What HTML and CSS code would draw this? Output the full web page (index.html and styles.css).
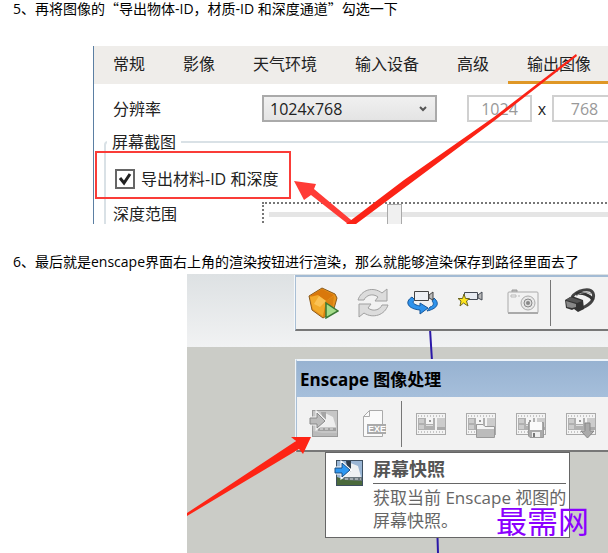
FILE: index.html
```html
<!DOCTYPE html>
<html lang="zh-CN">
<head>
    <meta charset="UTF-8">
    <meta name="viewport" content="width=device-width, initial-scale=1.0">
    <title>Enscape 渲染教程</title>
    <link rel="stylesheet" href="styles.css">
</head>
<body>
    <p class="step">5、再将图像的<span class="quote">“</span>导出物体-ID，材质-ID 和深度通道<span class="quote">”</span>勾选一下</p>

    <div class="settings">
        <div class="tabs">
            <button class="tab">常规</button>
            <button class="tab">影像</button>
            <button class="tab">天气环境</button>
            <button class="tab">输入设备</button>
            <button class="tab">高级</button>
            <button class="tab active">输出图像</button>
        </div>
        <div class="row resolution">
            <label class="row-label" for="resolution">分辨率</label>
            <select id="resolution">
                <option>1024x768</option>
            </select>
            <input class="size" type="text" value="1024" aria-label="宽度" disabled>
            <span class="times">x</span>
            <input class="size" type="text" value="768" aria-label="高度" disabled>
        </div>
        <fieldset>
            <legend>屏幕截图</legend>
            <div class="highlight">
                <input type="checkbox" id="export-depth" checked>
                <label for="export-depth">导出材料-ID 和深度</label>
            </div>
            <div class="row depth">
                <label class="row-label" for="depth-range">深度范围</label>
                <div class="slider">
                    <input type="range" id="depth-range" min="0" max="1000" value="342">
                </div>
            </div>
        </fieldset>
        <svg class="overlay" width="515" height="178">
            <path fill="#ff3b36" d="M200 135L222 138L220 143L262 178H254L217 149L210 154Z"/>
            <path fill="#fb2316" d="M482 8L483 10L400 75L262 178H252L310 134L400 71Z"/>
        </svg>
    </div>

    <p class="step">6、最后就是enscape界面右上角的渲染按钮进行渲染，那么就能够渲染保存到路径里面去了</p>

    <div class="viewport">
        <svg class="overlay" width="421" height="279">
            <path d="M243 55L245 87L251 279" stroke="#2b18a8" stroke-width="2" fill="none"/>
        </svg>

        <div class="toolbar main-bar">
            <button class="tool" aria-label="启动">
                <svg width="32" height="32" viewBox="0 0 32 32">
                    <path d="M15 1L28 7L30 11L26 25L16 31L5 23L2 9Z" fill="#e8941c" stroke="#8a5a1c"/>
                    <path d="M15 2L27 8L19 14L3 9Z" fill="#d9780c"/>
                    <path d="M3 10L11 8L19 14L16 29L6 22Z" fill="#f2aa2b"/>
                    <path d="M12 9L19 14L13 20L7 17Z" fill="#fac255"/>
                    <path d="M19 14L27 9L25 24L16 30Z" fill="#d98212"/>
                    <path d="M19 16L31 24L19 31Z" fill="#a5dc8a" stroke="#3b7a35" stroke-width="1.5"/>
                </svg>
            </button>
            <button class="tool" aria-label="同步">
                <svg width="32" height="32" viewBox="0 0 32 32" fill="#dcdcdc" stroke="#a0a0a0">
                    <path d="M1 13C4 3 16 -1 25 6L30 2V14H18L21 10C16 6 9 8 7 13Z"/>
                    <path d="M31 18C28 28 16 32 7 26L2 30V17H14L11 21C16 25 23 23 25 18Z"/>
                </svg>
            </button>
            <button class="tool" aria-label="同步视图">
                <svg width="32" height="32" viewBox="0 0 32 32">
                    <path d="M5 10C-3 15 1 22 13 23V27L21 21L13 16V19C7 18 4 15 8 13Z" fill="#2f93ec" stroke="#17579b"/>
                    <path d="M27 11C34 17 29 22 20 24L23 20C27 19 27 16 25 14Z" fill="#2f93ec" stroke="#17579b"/>
                    <path d="M7.500 4.500H21.500V13.500H7.500Z" fill="#eef0f4" stroke="#444"/>
                    <path d="M22 8L26 5V13L22 11Z" fill="#bbb" stroke="#444"/>
                </svg>
            </button>
            <button class="tool" aria-label="收藏视图">
                <svg width="32" height="32" viewBox="0 0 32 32">
                    <path d="M7.500 5.500H20.500V12.500H7.500Z" fill="#e7ebf2" stroke="#444a55"/>
                    <path d="M21 8L25 5V13L21 11Z" fill="#bbb" stroke="#444a55"/>
                    <path d="M7 7L8.500 11.500H12.500L9.500 14L11 19L6.500 16L3 19L4 14L1 11.500H5.500Z" fill="#ffe51d" stroke="#6d6720"/>
                </svg>
            </button>
            <button class="tool" aria-label="拍照">
                <svg width="32" height="32" viewBox="0 0 32 32">
                    <path d="M5 5V3H10V5" fill="#bbb" stroke="#999"/>
                    <rect x="1" y="5" width="30" height="21" rx="1" fill="#f2f2f2" stroke="#aaa"/>
                    <path d="M1 26H31" stroke="#aaa" stroke-width="2"/>
                    <path d="M4 8H9V10H4ZM11 9H13" fill="none" stroke="#bbb"/>
                    <circle cx="21" cy="16" r="7" fill="#e8e8e8" stroke="#aaa"/>
                    <circle cx="21" cy="16" r="4" fill="#ddd" stroke="#888"/>
                    <circle cx="21" cy="16" r="2" fill="#888"/>
                </svg>
            </button>
            <span class="divider"></span>
            <button class="tool" aria-label="虚拟现实">
                <svg width="32" height="32" viewBox="0 0 32 32">
                    <path d="M8 10C13 3 26 0 29 6C31 11 28 17 18 21" fill="none" stroke="#444" stroke-width="3"/>
                    <path d="M12 7C18 5 26 8 29 13" fill="none" stroke="#333" stroke-width="3"/>
                    <path d="M12 9C16 6 22 4 27 7" fill="none" stroke="#999"/>
                    <path d="M1 13L8 9L19 13L20 22L14 25L10 22L8 23L2 21Z" fill="#333"/>
                    <path d="M2 14L12 17V20L8 21L3 20Z" fill="#888"/>
                    <path d="M6 10L18 14L13 16L2 13Z" fill="#555"/>
                </svg>
            </button>
        </div>

        <div class="toolbar image-bar">
            <div class="title">Enscape 图像处理</div>
            <div class="tools">
                <button class="tool" aria-label="屏幕快照">
                    <svg width="32" height="32" viewBox="0 0 32 32">
                        <rect x="4.500" y="2.500" width="25" height="26" fill="#c6c6c6" stroke="#999"/>
                        <path d="M8 18L15 4L25 9L28 19H8Z" fill="#eee"/>
                        <path d="M13 4H18V12L14 9Z" fill="#a5a5a5"/>
                        <path d="M10 20H28V23H10Z" fill="#a0a0a0"/>
                        <path d="M12 21H27" stroke="#e5e5e5" stroke-dasharray="3 2"/>
                        <path d="M5 28V23L14 25H29V28Z" fill="#bababa"/>
                        <path d="M2 10H9V5L17 13L9 20V16H2Z" fill="#bbb" stroke="#f2f2f2" stroke-width="3"/>
                        <path d="M2 10H9V5L17 13L9 20V16H2Z" fill="#bbb" stroke="#888"/>
                    </svg>
                </button>
                <button class="tool" aria-label="导出 EXE">
                    <svg width="32" height="32" viewBox="0 0 32 32">
                        <path d="M11.500 2.500H24.500V28.500H5.500V8.500Z" fill="#fafafa" stroke="#aaa"/>
                        <path d="M11.500 2.500V8.500H5.500" fill="none" stroke="#aaa"/>
                        <rect x="9" y="16" width="19" height="10" fill="#aaa"/>
                        <text class="exe" x="10" y="24">EXE</text>
                    </svg>
                </button>
                <span class="divider"></span>
                <button class="tool" aria-label="批量渲染">
                    <svg width="32" height="32" viewBox="0 0 32 32">
                        <g id="film">
                            <rect x="1.500" y="5.500" width="29" height="21" fill="#f4f4f4" stroke="#aaa"/>
                            <path d="M3 8H30M3 24H30" stroke="#999" stroke-dasharray="1 2"/>
                            <path d="M3 10H20V22H3Z" fill="#b0b0b0"/>
                            <path d="M22 10H30V22H22Z" fill="#ccc"/>
                            <path d="M22 19H30V22H22Z" fill="#aaa"/>
                            <path d="M4 11H9V15H4ZM4 17H9V21H4Z" fill="#ccc"/>
                            <path d="M11 10H18V16H11Z" fill="#f5f5f5"/>
                            <path d="M14 12H16V14H14Z" fill="#999"/>
                            <path d="M11 17H18V18H11Z" fill="#ddd"/>
                        </g>
                    </svg>
                </button>
                <button class="tool" aria-label="打开">
                    <svg width="32" height="32" viewBox="0 0 32 32">
                        <use href="#film"/>
                        <path d="M11.500 29.500V16.500H18L20 18.500H29.500V29.500Z" fill="#f4f4f4" stroke="#999"/>
                        <path d="M12 21H29V29H12Z" fill="#bbb"/>
                    </svg>
                </button>
                <button class="tool" aria-label="保存">
                    <svg width="32" height="32" viewBox="0 0 32 32">
                        <use href="#film"/>
                        <path d="M13.500 14.500H28.500V29.500H15L13.500 28Z" fill="#aaa" stroke="#999"/>
                        <path d="M15 14H27V22H15Z" fill="#fafafa"/>
                        <path d="M17 24H25V29H17Z" fill="#eee"/>
                        <path d="M18 25H20V29H18Z" fill="#777"/>
                    </svg>
                </button>
                <button class="tool" aria-label="下载">
                    <svg width="32" height="32" viewBox="0 0 32 32">
                        <use href="#film"/>
                        <path d="M20 15H25V23H29L22.500 30L16 23H20Z" fill="#aaa" stroke="#888"/>
                    </svg>
                </button>
            </div>
        </div>

        <div class="tooltip">
            <svg width="30" height="28" viewBox="0 0 30 28">
                <rect x="2.500" y="1.500" width="26" height="25" fill="#9ab6d4" stroke="#3d4f60"/>
                <path d="M7 18L14 3L24 7L27 18Z" fill="#eef1f2"/>
                <path d="M12 2H17V13L13 8Z" fill="#2f3c48"/>
                <path d="M9 18H28V22H9Z" fill="#6b777d"/>
                <path d="M11 20H27" stroke="#d9dfe0" stroke-dasharray="3 2"/>
                <path d="M3 26V18L11 21L28 22V26Z" fill="#4b6a3c"/>
                <path d="M1 9H8V4L16 11L8 18V14H1Z" fill="#2e98f2" stroke="#fff" stroke-width="3"/>
                <path d="M1 9H8V4L16 11L8 18V14H1Z" fill="#2e98f2" stroke="#184c80"/>
            </svg>
            <div class="tip-text">
                <h3>屏幕快照</h3>
                <p>获取当前 Enscape 视图的<br>屏幕快照。</p>
            </div>
        </div>

        <svg class="overlay" width="421" height="279">
            <path fill="#fe2415" d="M124 163L116 180L112 175L0 242V239L35 216L109 167L104 163Z"/>
        </svg>
        <div class="watermark">最需网</div>
    </div>
</body>
</html>
```

FILE: styles.css
```css
* {
    box-sizing: border-box;
}
body {
    margin: 0;
    background: #fff;
    color: #000;
    font-family: "Open Sans", "Noto Sans CJK SC", sans-serif;
    overflow: hidden;
}
button, input, select {
    font: inherit;
    margin: 0;
}
.step {
    margin: 0;
    padding-left: 13px;
    font-size: 14px;
    line-height: 16px;
    white-space: nowrap;
}
.quote {
    font-family: "Noto Sans CJK SC", sans-serif;
}
.overlay {
    position: absolute;
    top: 0;
    left: 0;
    pointer-events: none;
}

/* settings window */
.settings {
    position: relative;
    height: 178px;
    margin: 29px 0 30px 93px;
    border-left: 1px solid #5b7fa3;
    overflow: hidden;
    font-size: 16px;
    line-height: 20px;
    color: #222;
}
.tabs {
    display: flex;
    height: 38px;
    background: #efedea;
}
.tab {
    flex: none;
    padding: 0 19px;
    border: none;
    border-bottom: 3px solid transparent;
    background: none;
    color: #222;
}
.active {
    border-bottom-color: #df9726;
}
.row {
    display: flex;
    align-items: center;
}
.row-label {
    flex: none;
    width: 149px;
}
.resolution {
    margin: 11px 0 0 19px;
}
select {
    flex: none;
    width: 175px;
    height: 27px;
    padding: 0 6px;
    border: 2px solid #aaa;
    color: #222;
    appearance: none;
    background: url("data:image/svg+xml,%3Csvg xmlns='http://www.w3.org/2000/svg' width='8' height='6'%3E%3Cpath d='M1 1L4 4L7 1' fill='none' stroke='%23555' stroke-width='2'/%3E%3C/svg%3E") no-repeat right 8px center, linear-gradient(#f0f0f0, #e4e4e4);
}
.size {
    flex: none;
    width: 65px;
    height: 27px;
    padding: 0;
    border: 2px solid #d0d0d0;
    background: #fff;
    color: #999;
    text-align: center;
}
select + .size {
    margin-left: 30px;
}
.times {
    flex: none;
    width: 20px;
    text-align: center;
}
fieldset {
    width: 560px;
    margin: 10px 0 0 10px;
    padding: 0;
    border: 2px solid #d9e1e6;
    border-radius: 4px;
}
legend {
    margin-left: 1px;
    padding: 0 5px;
}
.highlight {
    display: flex;
    align-items: center;
    gap: 6px;
    width: 196px;
    height: 48px;
    margin: -1px 0 0 -11px;
    padding: 8px 0 0 18px;
    border: 2px solid #fa3c38;
    position: relative;
}
input[type="checkbox"] {
    appearance: none;
    width: 20px;
    height: 20px;
    border: 2px solid #666;
    background: url("data:image/svg+xml,%3Csvg xmlns='http://www.w3.org/2000/svg' width='16' height='16'%3E%3Cpath d='M3 7L7 12L13 3' fill='none' stroke='%23222' stroke-width='3'/%3E%3C/svg%3E") center no-repeat;
}
.depth {
    align-items: flex-start;
    margin: 3px 0 0 7px;
}
.slider {
    flex: none;
    width: 376px;
    height: 40px;
    padding-left: 5px;
    border: 2px dotted #777;
}
.depth .row-label {
    padding-top: 2px;
}
input[type="range"] {
    display: block;
    appearance: none;
    width: 360px;
    height: 22px;
    background: linear-gradient(#e5e5e5, #e5e5e5) 0 8px / 100% 5px no-repeat;
}
input[type="range"]::-webkit-slider-thumb {
    appearance: none;
    width: 15px;
    height: 22px;
    border: 1px solid #aaa;
    background: #f0f0f0;
}

/* viewport with toolbars */
.viewport {
    position: relative;
    height: 279px;
    margin: 4px 0 0 187px;
    padding-top: 1px;
    overflow: hidden;
    background: linear-gradient(#dde1e3, #f1f2f3 73px, #cbccc7 73px);
}
.toolbar {
    position: relative;
    margin-left: 108px;
    border-left: 1px solid #a9bfd5;
    border-bottom: 2px solid #777;
    background: #f2f2f2;
}
.main-bar {
    display: flex;
    align-items: center;
    height: 56px;
    padding-left: 2px;
    border-top: 2px solid #a3bbd4;
    box-shadow: -1px 0 0 #f5f8fa;
}
.tool {
    display: flex;
    flex: none;
    align-items: center;
    justify-content: center;
    width: 50px;
    height: 50px;
    padding: 0;
    border: none;
    background: none;
}
.divider {
    flex: none;
    width: 1px;
    height: 46px;
    margin: 0 4px 0 2px;
    background: #777;
}
.image-bar {
    margin-top: 28px;
    margin-left: 109px;
    border-top: 2px solid #eef4fa;
    box-shadow: -1px 0 0 #eef4fa;
}
.title {
    padding: 0 3px;
    height: 36px;
    background: linear-gradient(#97b2d1, #a6bfdb);
    font-size: 17px;
    font-weight: bold;
    line-height: 38px;
    white-space: nowrap;
}
.tools {
    display: flex;
    align-items: center;
    height: 53px;
    padding-left: 2px;
}
.exe {
    font: bold 9px "Liberation Sans", sans-serif;
    fill: #fff;
}
.tooltip {
    position: absolute;
    top: 178px;
    left: 138px;
    display: flex;
    align-items: flex-start;
    gap: 9px;
    width: 245px;
    height: 86px;
    padding: 6px 5px 6px 8px;
    border: 1px solid #666;
    background: #fff;
    color: #666;
    font-size: 17px;
    line-height: 23px;
    white-space: nowrap;
}
.tooltip svg {
    flex: none;
}
.tip-text {
    flex: 1;
}
.tooltip h3 {
    margin: 0 0 2px;
    padding-bottom: 4px;
    border-bottom: 1px solid #666;
    color: #555;
    font-size: 18px;
    line-height: 20px;
}
.tooltip p {
    margin: 0;
}
.watermark {
    position: absolute;
    top: 229px;
    left: 309px;
    color: #8b00ff;
    font-size: 31px;
    line-height: 36px;
}
```
